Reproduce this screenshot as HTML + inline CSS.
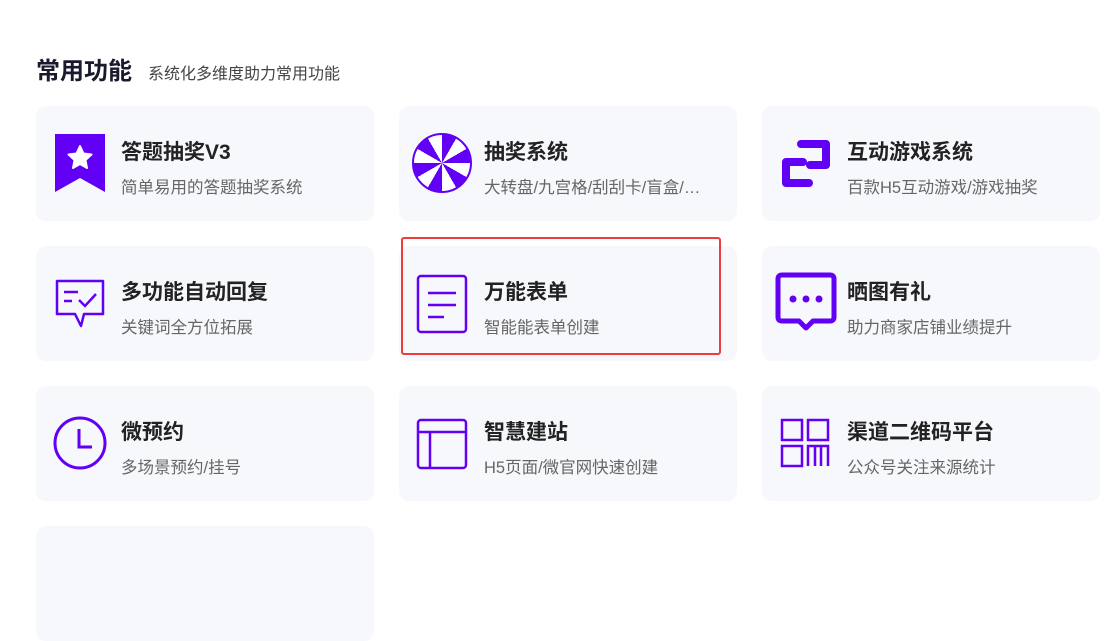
<!DOCTYPE html><html><head><meta charset="utf-8"><style>
body{margin:0;width:1114px;height:550px;background:#fff;position:relative;overflow:hidden;font-family:"Liberation Sans","Noto Sans CJK SC",sans-serif}
.h{position:absolute;left:36px;top:51px;font-size:24px;font-weight:bold;color:#1a1a2e}
.hs{position:absolute;left:148px;top:60px;font-size:16px;color:#444}
.c{position:absolute;width:338px;height:115px;background:#f7f8fc;border-radius:10px}
.t{position:absolute;left:85px;top:30px;font-size:21px;font-weight:bold;color:#222}
.s{position:absolute;left:85px;top:68px;font-size:16.5px;color:#666;white-space:nowrap}
svg,.w{position:absolute}
</style></head><body>
<div class="h">常用功能</div><div class="hs">系统化多维度助力常用功能</div>
<div class="c" style="left:36px;top:106px"><div class="t">答题抽奖V3</div><div class="s">简单易用的答题抽奖系统</div></div>
<div class="c" style="left:399px;top:106px"><div class="t">抽奖系统</div><div class="s">大转盘/九宫格/刮刮卡/盲盒/…</div></div>
<div class="c" style="left:762px;top:106px"><div class="t">互动游戏系统</div><div class="s">百款H5互动游戏/游戏抽奖</div></div>
<div class="c" style="left:36px;top:246px"><div class="t">多功能自动回复</div><div class="s">关键词全方位拓展</div></div>
<div class="c" style="left:399px;top:246px"><div class="t">万能表单</div><div class="s">智能能表单创建</div></div>
<div class="c" style="left:762px;top:246px"><div class="t">晒图有礼</div><div class="s">助力商家店铺业绩提升</div></div>
<div class="c" style="left:36px;top:386px"><div class="t">微预约</div><div class="s">多场景预约/挂号</div></div>
<div class="c" style="left:399px;top:386px"><div class="t">智慧建站</div><div class="s">H5页面/微官网快速创建</div></div>
<div class="c" style="left:762px;top:386px"><div class="t">渠道二维码平台</div><div class="s">公众号关注来源统计</div></div>
<div class="c" style="left:36px;top:526px"></div>
<div style="position:absolute;left:401px;top:237px;width:316px;height:114px;border:2px solid #ee3b3b;border-radius:3px"></div>
<svg style="left:54px;top:133px" width="52" height="60" viewBox="0 0 52 60"><path d="M1 1H51V59L26 45L1 59Z" fill="#6200f5"/><path d="M26 13L29.5 20.5L37.5 21.5L31.5 27L33 35L26 31L19 35L20.5 27L14.5 21.5L22.5 20.5Z" fill="#fff" stroke="#fff" stroke-width="2" stroke-linejoin="round"/></svg>
<div class="w" style="left:412px;top:133px;width:56px;height:56px;border-radius:50%;border:2px solid #6200f5;background:conic-gradient(#6200f5 0 30deg,#fff 0 60deg,#6200f5 0 90deg,#fff 0 120deg,#6200f5 0 150deg,#fff 0 180deg,#6200f5 0 210deg,#fff 0 240deg,#6200f5 0 270deg,#fff 0 300deg,#6200f5 0 330deg,#fff 0 360deg)"></div>
<svg style="left:770px;top:130px" width="70" height="70" viewBox="770 130 70 70"><path d="M801 144H826V165H810M803 162H786V183H809" fill="none" stroke="#6200f5" stroke-width="8" stroke-linejoin="round" stroke-linecap="round"/></svg>
<svg style="left:54px;top:278px" width="52" height="52" viewBox="0 0 52 52"><path d="M3 3H49V36H30L27 48L21 36H3Z" fill="none" stroke="#6200f5" stroke-width="2.5" stroke-linejoin="round"/><path d="M10 14H24M10 23H18M25 22L31 28L42 16" fill="none" stroke="#6200f5" stroke-width="2.5"/></svg>
<svg style="left:416px;top:274px" width="54" height="60" viewBox="0 0 54 60"><rect x="2" y="2" width="48" height="56" rx="3" fill="none" stroke="#6200f5" stroke-width="2.5"/><path d="M12 19H40M12 31H40M12 43H28" stroke="#6200f5" stroke-width="2.5"/></svg>
<svg style="left:775px;top:272px" width="62" height="64" viewBox="0 0 62 64"><path d="M7 3H55Q59 3 59 7V45Q59 49 55 49H38L31 56L24 49H7Q3 49 3 45V7Q3 3 7 3Z" fill="none" stroke="#6200f5" stroke-width="5" stroke-linejoin="round"/><circle cx="18" cy="27" r="3.5" fill="#6200f5"/><circle cx="31" cy="27" r="3.5" fill="#6200f5"/><circle cx="44" cy="27" r="3.5" fill="#6200f5"/></svg>
<svg style="left:52px;top:415px" width="56" height="56" viewBox="0 0 56 56"><circle cx="28" cy="28" r="25" fill="none" stroke="#6200f5" stroke-width="3"/><path d="M27 14V32H40" fill="none" stroke="#6200f5" stroke-width="3"/></svg>
<svg style="left:416px;top:418px" width="54" height="54" viewBox="0 0 54 54"><rect x="2" y="2" width="48" height="48" rx="3" fill="none" stroke="#6200f5" stroke-width="2.5"/><path d="M2 14H50M14 14V50" stroke="#6200f5" stroke-width="2.5"/></svg>
<svg style="left:780px;top:418px" width="52" height="52" viewBox="0 0 52 52"><g fill="none" stroke="#6200f5" stroke-width="2.5"><rect x="2" y="2" width="20" height="20"/><rect x="28" y="2" width="20" height="20"/><rect x="2" y="28" width="20" height="20"/><path d="M28 48V28H48V48M35 28V48M41 28V48"/></g></svg>
</body></html>
